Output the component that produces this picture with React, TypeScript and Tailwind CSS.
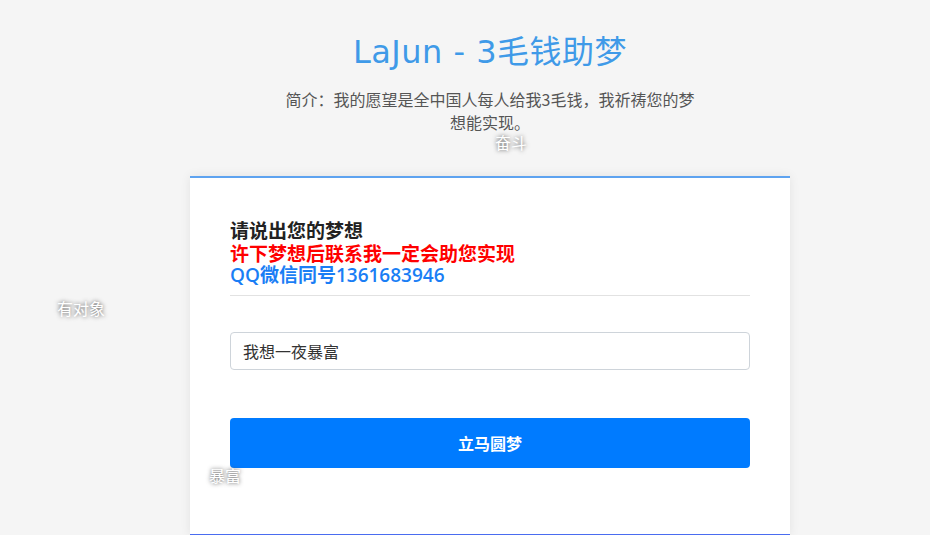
import React from "react";

export default function App() {
  return (
    <div className="relative min-h-screen overflow-hidden bg-[#f5f5f5] font-['Noto_Sans_CJK_SC',sans-serif]">
      <div className="w-[980px]">
        <div className="flex flex-col items-center pt-[28px]">
          <h1 className="text-[32px] leading-[48px] font-normal text-[#3f9ae8] font-['DejaVu_Sans','Noto_Sans_CJK_SC',sans-serif] tracking-[0.5px]">
            LaJun - 3毛钱助梦
          </h1>
          <p className="mt-[12px] w-[420px] text-center text-[16px] leading-[23px] text-[#555] [text-spacing-trim:space-all]">
            简介：我的愿望是全中国人每人给我3毛钱，我祈祷您的梦想能实现。
          </p>
        </div>

        <div className="mx-auto mt-[42px] w-[600px] bg-white border-t-2 border-b-2 border-t-[#5ea3f0] border-b-[#4a6cf0] shadow-[0_0_10px_rgba(0,0,0,0.08)] px-[40px] pt-[41px] pb-[66px]">
          <div className="text-[19px] leading-[22.5px] font-bold">
            <div className="text-[#222]">请说出您的梦想</div>
            <div className="text-[#ff0000]">许下梦想后联系我一定会助您实现</div>
            <div className="text-[#1a7ef5] font-['Open_Sans','Noto_Sans_CJK_SC',sans-serif] font-semibold">
              QQ微信同号1361683946
            </div>
          </div>
          <div className="mt-[8px] h-px bg-[#e2e2e2]" />
          <div className="mt-[36px] h-[38px] rounded-[4px] border border-[#ced4da] flex items-center px-[12px] text-[16px] text-[#333]">
            我想一夜暴富
          </div>
          <button className="mt-[48px] w-full h-[50px] rounded-[4px] bg-[#007bff] text-white text-[16px] font-bold">
            立马圆梦
          </button>
        </div>
      </div>

      <span className="absolute left-[495px] top-[131px] text-[16px] leading-[22px] text-white [text-shadow:0_0_4px_#555]">
        奋斗
      </span>
      <span className="absolute left-[57px] top-[297px] text-[16px] leading-[22px] text-white [text-shadow:0_0_4px_#555]">
        有对象
      </span>
      <span className="absolute left-[209px] top-[464px] text-[16px] leading-[22px] text-white [text-shadow:0_0_4px_#555]">
        暴富
      </span>
    </div>
  );
}
